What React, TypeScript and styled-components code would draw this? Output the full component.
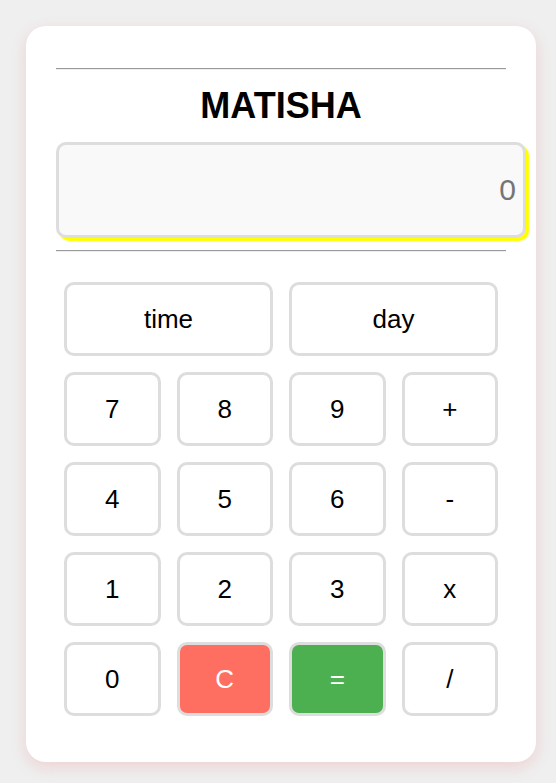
import React from "react";
import styled, { createGlobalStyle } from "styled-components";

const Global = createGlobalStyle`
  html, body {
    margin: 0;
    padding: 0;
    background: #efefef;
    font-family: "Liberation Sans", Arial, sans-serif;
  }
`;

const Page = styled.div`
  display: flex;
  align-items: flex-start;
  padding: 26px 0 0 26px;
  min-height: 783px;
  box-sizing: border-box;
`;

const Card = styled.div`
  width: 450px;
  padding: 42px 30px 38px;
  background: #ffffff;
  border-radius: 20px;
  box-shadow: 0 5px 16px rgba(230, 60, 60, 0.16);
`;

const Rule = styled.hr`
  margin: 0;
  height: 0;
  border: none;
  border-top: 1px solid #9a9a9a;
  border-bottom: 1px solid #eeeeee;
`;

const Title = styled.h1`
  margin: 15px 0 15px;
  font-size: 36px;
  font-weight: bold;
  text-align: center;
  color: #000;
`;

const Display = styled.input`
  display: block;
  width: 450px;
  height: 90px;
  padding: 0 7px;
  margin: 0 0 12px;
  border: 3px solid #dddddd;
  border-radius: 10px;
  background: #f9f9f9;
  box-shadow: 3px 3px 1px #ffff00;
  font-family: "Liberation Sans", Arial, sans-serif;
  font-size: 30px;
  text-align: right;
  outline: none;
  box-sizing: content-box;
  &::placeholder {
    color: #757575;
  }
`;

const Keys = styled.div`
  display: grid;
  grid-template-columns: repeat(4, 1fr);
  gap: 16px;
  padding: 8px;
  margin-top: 22px;
`;

const Key = styled.button<{ $span?: number; $bg?: string; $fg?: string }>`
  grid-column: span ${(p) => p.$span ?? 1};
  height: 74px;
  border: 3px solid #dddddd;
  border-radius: 10px;
  background: ${(p) => p.$bg ?? "#ffffff"};
  color: ${(p) => p.$fg ?? "#000000"};
  font-family: "Liberation Sans", Arial, sans-serif;
  font-size: 26px;
  padding: 0;
  cursor: pointer;
`;

type K = { label: string; span?: number; bg?: string; fg?: string };

const keys: K[] = [
  { label: "time", span: 2 },
  { label: "day", span: 2 },
  { label: "7" },
  { label: "8" },
  { label: "9" },
  { label: "+" },
  { label: "4" },
  { label: "5" },
  { label: "6" },
  { label: "-" },
  { label: "1" },
  { label: "2" },
  { label: "3" },
  { label: "x" },
  { label: "0" },
  { label: "C", bg: "#ff6f61", fg: "#ffffff" },
  { label: "=", bg: "#4caf50", fg: "#ffffff" },
  { label: "/" },
];

export default function App() {
  return (
    <>
      <Global />
      <Page>
        <Card>
          <Rule />
          <Title>MATISHA</Title>
          <Display placeholder="0" readOnly />
          <Rule />
          <Keys>
            {keys.map((k, i) => (
              <Key key={i} $span={k.span} $bg={k.bg} $fg={k.fg}>
                {k.label}
              </Key>
            ))}
          </Keys>
        </Card>
      </Page>
    </>
  );
}
